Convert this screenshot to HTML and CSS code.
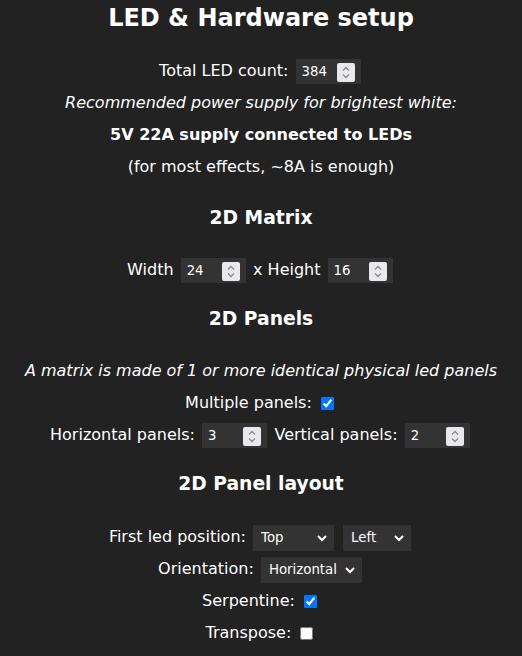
FILE: index.html
```html
<!DOCTYPE html>
<html>
<head>
<meta charset="utf-8">
<link rel="stylesheet" href="styles.css">
</head>
<body>
<h2 class="title">LED &amp; Hardware setup</h2>
<div class="line">Total LED count: <span class="numw"><input class="num" type="number" value="384"><svg class="spin" viewBox="0 0 18 19"><path d="M6 7.5 L9 4.5 L12 7.5 M6 11.5 L9 14.5 L12 11.5"/></svg></span></div>
<div class="line"><i>Recommended power supply for brightest white:</i></div>
<div class="line"><b>5V 22A supply connected to LEDs</b></div>
<div class="line">(for most effects, ~8A is enough)</div>

<h3 class="sec s1">2D Matrix</h3>
<div class="line">Width <span class="numw"><input class="num" type="number" value="24"><svg class="spin" viewBox="0 0 18 19"><path d="M6 7.5 L9 4.5 L12 7.5 M6 11.5 L9 14.5 L12 11.5"/></svg></span> x Height <span class="numw"><input class="num" type="number" value="16"><svg class="spin" viewBox="0 0 18 19"><path d="M6 7.5 L9 4.5 L12 7.5 M6 11.5 L9 14.5 L12 11.5"/></svg></span></div>

<h3 class="sec s2">2D Panels</h3>
<div class="line"><i>A matrix is made of 1 or more identical physical led panels</i></div>
<div class="line">Multiple panels: <input type="checkbox" checked></div>
<div class="line">Horizontal panels: <span class="numw"><input class="num" type="number" value="3"><svg class="spin" viewBox="0 0 18 19"><path d="M6 7.5 L9 4.5 L12 7.5 M6 11.5 L9 14.5 L12 11.5"/></svg></span> Vertical panels: <span class="numw"><input class="num" type="number" value="2"><svg class="spin" viewBox="0 0 18 19"><path d="M6 7.5 L9 4.5 L12 7.5 M6 11.5 L9 14.5 L12 11.5"/></svg></span></div>

<h3 class="sec s3">2D Panel layout</h3>
<div class="line">First led position: <select class="sel"><option>Top</option><option>Bottom</option></select> <select class="sel"><option>Left</option><option>Right</option></select></div>
<div class="line">Orientation: <select class="sel"><option>Horizontal</option><option>Vertical</option></select></div>
<div class="line">Serpentine: <input type="checkbox" checked></div>
<div class="line">Transpose: <input type="checkbox"></div>
</body>
</html>
```

FILE: styles.css
```css
html, body {
  margin: 0;
  padding: 0;
}
body {
  background: #222;
  color: #fff;
  font-family: "DejaVu Sans", Verdana, sans-serif;
  font-size: 16px;
  text-align: center;
}
.title {
  margin: 0;
  font-size: 24px;
  line-height: 36px;
  padding-bottom: 19px;
}
.line {
  line-height: 32px;
  height: 32px;
}
.sec {
  margin: 17px 0 21px;
  font-size: 18.72px;
  line-height: 32px;
}
.s1 {
  margin-top: 19px;
  margin-bottom: 20px;
}
.s2 {
  margin-bottom: 20px;
}
input, select {
  background: #333;
  color: #fff;
  font-family: "DejaVu Sans", Verdana, sans-serif;
  border: 0.5ex solid #333;
  vertical-align: middle;
}
.numw {
  position: relative;
  display: inline-block;
  vertical-align: middle;
  line-height: normal;
}
.num {
  width: 4em;
  font-size: 13.333px;
  margin: 2px;
  vertical-align: top;
  -moz-appearance: textfield;
}
.num::-webkit-inner-spin-button,
.num::-webkit-outer-spin-button {
  -webkit-appearance: none;
  margin: 0;
}
.spin {
  position: absolute;
  right: 8px;
  top: 6px;
  width: 18px;
  height: 19px;
  background: #e9e9ed;
  border-radius: 2px;
  fill: none;
  stroke: #8a8a8e;
  stroke-width: 1.3;
}
.sel {
  font-size: 13.333px;
  margin: 2px;
  padding-right: 4px;
  height: 26px;
}
input[type="checkbox"] {
  border: 0;
}
```
